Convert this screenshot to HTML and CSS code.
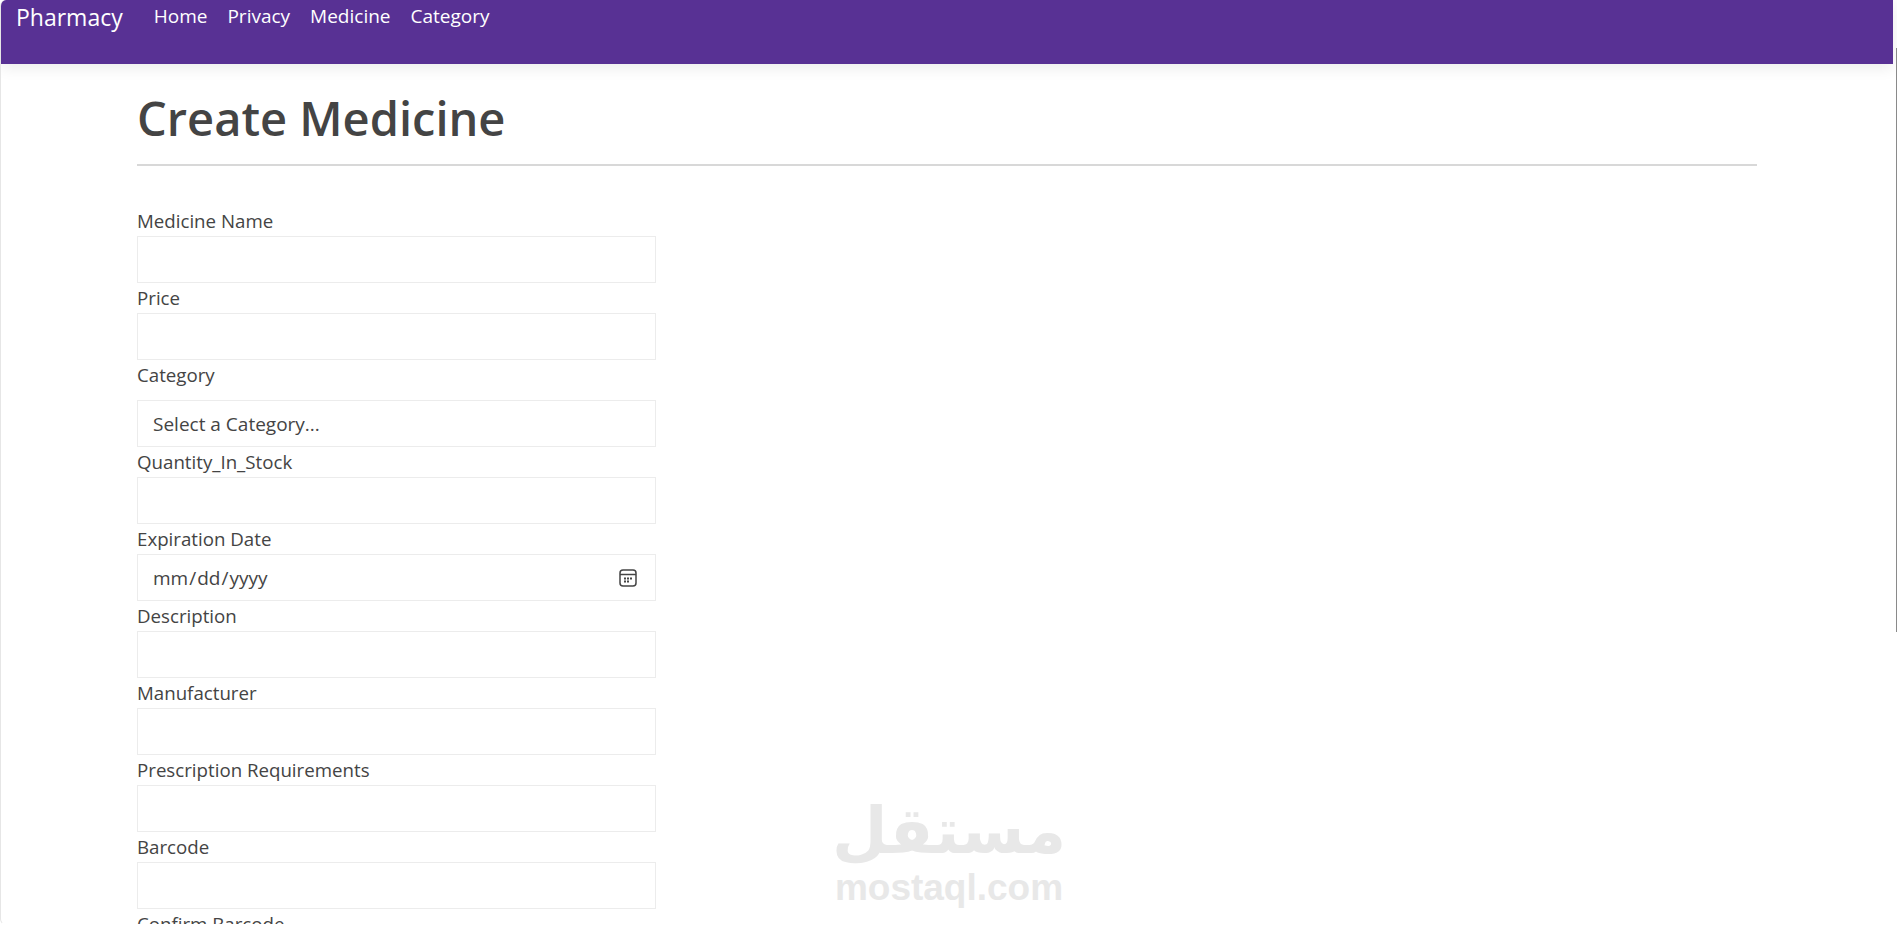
FILE: index.html
```html
<!DOCTYPE html>
<html lang="en">

<head>
    <meta charset="UTF-8">
    <meta name="viewport" content="width=device-width, initial-scale=1.0">
    <title>Create Medicine</title>
    <link rel="stylesheet" href="styles.css">
</head>

<body>
    <div class="window">
        <!-- top navigation -->
        <nav class="navbar">
            <a class="brand" href="#">Pharmacy</a>
            <ul class="nav-links">
                <li><a href="#">Home</a></li>
                <li><a href="#">Privacy</a></li>
                <li><a href="#">Medicine</a></li>
                <li><a href="#">Category</a></li>
            </ul>
        </nav>

        <main class="content">
            <h1 class="page-title">Create Medicine</h1>
            <hr class="title-rule">

            <form class="medicine-form">
                <div class="field">
                    <label for="name">Medicine Name</label>
                    <input id="name" type="text">
                </div>
                <div class="field">
                    <label for="price">Price</label>
                    <input id="price" type="text">
                </div>
                <div class="field field-select">
                    <label for="category">Category</label>
                    <select id="category">
                        <option>Select a Category...</option>
                    </select>
                </div>
                <div class="field">
                    <label for="quantity">Quantity_In_Stock</label>
                    <input id="quantity" type="text">
                </div>
                <div class="field field-date">
                    <label for="expiration">Expiration Date</label>
                    <input id="expiration" type="date">
                    <!-- calendar icon -->
                    <svg class="date-icon" viewBox="0 0 18 18" width="18" height="18" fill="none">
                        <rect x="1" y="1" width="16" height="16" rx="3" stroke="#444" stroke-width="1.5"/>
                        <path d="M1 5.5h16" stroke="#444" stroke-width="1.5"/>
                        <path d="M5 8.5h2v2H5zM8 8.5h2v2H8zM11 8.5h2v2h-2zM5 11.5h2v2H5zM8 11.5h2v2H8z" fill="#444"/>
                    </svg>
                </div>
                <div class="field">
                    <label for="description">Description</label>
                    <input id="description" type="text">
                </div>
                <div class="field">
                    <label for="manufacturer">Manufacturer</label>
                    <input id="manufacturer" type="text">
                </div>
                <div class="field">
                    <label for="prescription">Prescription Requirements</label>
                    <input id="prescription" type="text">
                </div>
                <div class="field">
                    <label for="barcode">Barcode</label>
                    <input id="barcode" type="text">
                </div>
                <div class="field">
                    <label for="confirm">Confirm Barcode</label>
                    <input id="confirm" type="text">
                </div>
            </form>
        </main>

        <!-- watermark over the page -->
        <div class="watermark">
            <span class="watermark-ar" dir="rtl" lang="ar">مستقل</span>
            <span class="watermark-en">mostaql.com</span>
        </div>

        <div class="scroll-line"></div>
    </div>
</body>

</html>
```

FILE: styles.css
```css
html,
body {
    margin: 0;
    height: 100%;
    overflow: hidden;
    background-color: #fff;
}

body {
    font-family: "Open Sans", "Noto Sans", "Liberation Sans", sans-serif;
    color: #444;
}

.window {
    position: relative;
    height: 925px;
    box-sizing: border-box;
    padding-right: 4px;
    border-left: 1px solid #e6e6e6;
    border-bottom: 1px solid transparent;
    border-radius: 6px 0 0 6px;
    overflow: hidden;
}

/* navbar */
.navbar {
    display: flex;
    align-items: flex-start;
    height: 64px;
    padding-left: 15px;
    background-color: #583194;
    box-shadow: 0 4px 14px rgba(0, 0, 0, 0.08);
}

.brand {
    margin-right: 21px;
    font-size: 23px;
    line-height: 34px;
    color: #fff;
    text-decoration: none;
}

.nav-links {
    display: flex;
    gap: 20px;
    margin: 0;
    padding: 0 0 0 10px;
    list-style: none;
}

.nav-links a {
    font-size: 19px;
    line-height: 33px;
    color: #fff;
    text-decoration: none;
}

/* page content */
.content {
    padding: 1px 136px 0 136px;
}

.page-title {
    margin: 0;
    padding-top: 18px;
    font-size: 47px;
    line-height: 70px;
    font-weight: 600;
    color: #444;
}

.title-rule {
    height: 2px;
    margin: 11px 0 40px;
    border: 0;
    background-color: #d8d8d8;
}

.medicine-form {
    width: 519px;
}

.field label {
    display: block;
    font-size: 18.7px;
    line-height: 30px;
}

.field input,
.field select {
    display: block;
    width: 100%;
    height: 47px;
    box-sizing: border-box;
    padding: 0 15px;
    border: 1px solid #ececec;
    border-radius: 0;
    background-color: #fff;
    font-family: inherit;
    font-size: 19px;
    color: #444;
    appearance: none;
}

.field-select label {
    margin-bottom: 10px;
}

/* date field: native picker is hidden, icon is drawn over it */
.field-date {
    position: relative;
}

.field input[type="date"] {
    padding-left: 14px;
    appearance: auto;
}

.field input[type="date"]::-webkit-calendar-picker-indicator {
    opacity: 0;
}

.date-icon {
    position: absolute;
    right: 19px;
    bottom: 14px;
    pointer-events: none;
}

/* watermark */
.watermark {
    position: absolute;
    left: 833px;
    top: 794px;
    width: 230px;
    display: flex;
    flex-direction: column;
    align-items: center;
    color: #e8e8e8;
    font-weight: 700;
    pointer-events: none;
}

.watermark-ar {
    font-family: "DejaVu Sans", sans-serif;
    font-size: 64px;
    line-height: 74px;
}

.watermark-en {
    font-family: "Liberation Sans", sans-serif;
    font-size: 37px;
    line-height: 40px;
}

.scroll-line {
    position: absolute;
    right: 0;
    top: 48px;
    width: 1px;
    height: 584px;
    background-color: #8a8a8a;
}
```
